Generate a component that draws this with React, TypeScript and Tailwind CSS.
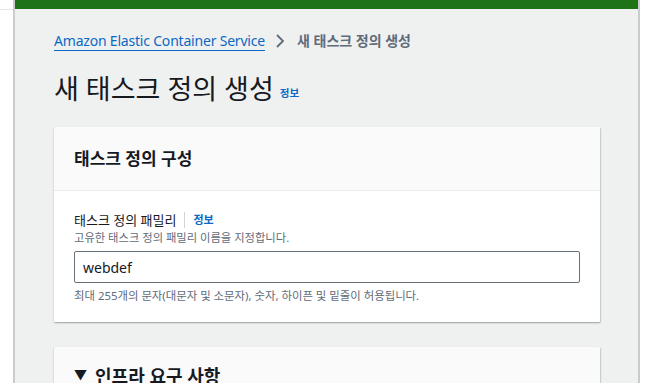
import React from "react";

const font = { fontFamily: '"Noto Sans", "Noto Sans CJK KR", sans-serif' };

export default function App() {
  return (
    <div className="flex h-[383px] w-[653px] overflow-hidden bg-white" style={font}>
      <div className="w-[13px] shrink-0 border-t border-[#e4e6e8] mt-[9px]" />
      <div className="flex w-[627px] shrink-0 flex-col border-x-2 border-[#c9cccf] bg-[#eff1f0]">
        <div className="h-[9px] shrink-0 bg-[#1e7316]" />
        <div className="pl-[39px] pr-[38px]">
          <div className="mt-[22px] flex items-center text-[14px] leading-[20px]">
            <span className="text-[#0c68c6] underline decoration-[#0c68c6] underline-offset-[4px] tracking-[-0.2px]">
              Amazon Elastic Container Service
            </span>
            <svg width="12" height="16" viewBox="0 0 12 16" className="ml-[9px] mr-[11px]">
              <path d="M3 2 L9 8 L3 14" fill="none" stroke="#5f6b7a" strokeWidth="1.8" />
            </svg>
            <span className="font-bold text-[#5f6b7a]">새 태스크 정의 생성</span>
          </div>
          <div className="mt-[20px] flex items-end">
            <h1 className="text-[27px] leading-[36px] text-[#16191f]">새 태스크 정의 생성</h1>
            <span className="mb-[5px] ml-[6px] text-[10.5px] font-bold text-[#0c68c6]">정보</span>
          </div>
          <div className="mt-[20px] rounded-[1px] bg-white shadow-[0_1px_2px_rgba(0,28,36,0.3),1px_1px_1px_rgba(0,28,36,0.1)]">
            <div className="flex h-[64px] items-center border-b border-[#e9ebed] bg-[#fafafa] px-[20px]">
              <h2 className="text-[17px] font-bold text-[#16191f]">태스크 정의 구성</h2>
            </div>
            <div className="px-[20px] pb-[18px] pt-[19px]">
              <div className="flex items-center text-[13px] leading-[20px] text-[#16191f]">
                <span>태스크 정의 패밀리</span>
                <span className="mx-[8px] h-[16px] w-px bg-[#d1d5db]" />
                <span className="text-[11px] font-bold text-[#0c68c6]">정보</span>
              </div>
              <div className="mt-[0px] text-[11.3px] leading-[16px] text-[#5f6b7a]">
                고유한 태스크 정의 패밀리 이름을 지정합니다.
              </div>
              <div className="mt-[5px] flex h-[32px] items-center rounded-[2px] border border-[#687078] bg-white px-[8px] text-[14px] text-[#16191f]">
                webdef
              </div>
              <div className="mt-[5px] text-[11.4px] leading-[16px] text-[#5f6b7a]">
                최대 255개의 문자(대문자 및 소문자), 숫자, 하이픈 및 밑줄이 허용됩니다.
              </div>
            </div>
          </div>
          <div className="mt-[25px] rounded-[1px] bg-[#fafafa] shadow-[0_1px_2px_rgba(0,28,36,0.3),1px_1px_1px_rgba(0,28,36,0.1)]">
            <div className="flex h-[64px] items-start px-[20px] pt-[16px]">
              <span className="mr-[8px] mt-[2px] text-[13px] text-[#16191f]">▼</span>
              <h2 className="text-[18px] font-bold text-[#16191f]">인프라 요구 사항</h2>
            </div>
          </div>
        </div>
      </div>
      <div className="flex-1 bg-white" />
    </div>
  );
}
